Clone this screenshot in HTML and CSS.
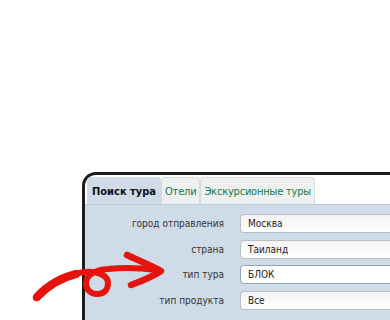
FILE: index.html
```html
<!DOCTYPE html>
<html>
<head>
<meta charset="utf-8">
<title>Поиск тура</title>
<link rel="stylesheet" href="styles.css">
</head>
<body>
<div id="frame">
 <ul class="tabs">
  <li class="active">Поиск тура</li>
  <li>Отели</li>
  <li>Экскурсионные туры</li>
 </ul>
 <div class="panel">
  <form>
   <div class="row"><label>город отправления</label><div class="field">Москва</div></div>
   <div class="row"><label>страна</label><div class="field">Таиланд</div></div>
   <div class="row"><label>тип тура</label><div class="field focus">БЛОК</div></div>
   <div class="row"><label>тип продукта</label><div class="field">Все</div></div>
  </form>
 </div>
</div>

<svg class="arrow" width="180" height="70" viewBox="0 0 180 70">
 <path d="M36 58 C50 44 66 34 85 32 C99 31 108 36 108 43 C108 51 103 54 97 54 C90 54 86 49 86 43 C86 35 95 30 108 29 C125 27 142 28 157 30" fill="none" stroke="#e5140e" stroke-width="6" stroke-linecap="round"/>
 <path d="M37 57 C48 45 60 38 76 34" fill="none" stroke="#e5140e" stroke-width="8.5" stroke-linecap="round"/>
 <path d="M127 15 C140 21 152 26 161 31 C152 37 142 41 131 45" fill="none" stroke="#e5140e" stroke-width="6.5" stroke-linecap="round" stroke-linejoin="round"/>
</svg>
</body>
</html>
```

FILE: styles.css
```css
body{
	margin: 0;
	background: #fff;
	overflow: hidden;
	height: 320px;
	font-family: "DejaVu Sans Condensed", "DejaVu Sans", Verdana, sans-serif;
	font-size: 11px;
}

/* frame */
#frame{
	margin: 172px 0 0 82px;
	width: 308px;
	border-top: 3px solid #1c1c1c;
	border-left: 3px solid #1c1c1c;
	border-top-left-radius: 14px;
	background: #fff;
}

/* tabs */
.tabs{
	list-style: none;
	margin: 0;
	padding: 2px 0 0 2px;
	display: flex;
	border-bottom: 1px solid #bccbd9;
}
.tabs li{
	height: 26px;
	line-height: 28px;
	padding: 0 3px;
	background: #eef0f0;
	border: 1px solid #d5dadd;
	border-bottom: none;
	border-radius: 4px 4px 0 0;
	color: #14784a;
	letter-spacing: -0.2px;
}
.tabs li.active{
	background: #cfdce8;
	border-color: #cfdce8;
	color: #111;
	font-weight: bold;
	padding: 0 4px;
	letter-spacing: 0;
}

/* form */
.panel{
	background: #cfdce8;
	padding: 6px 0 12px 0;
	height: 100px;
}
.row{
	display: flex;
	align-items: center;
	height: 25.5px;
}
.row label{
	width: 139px;
	text-align: right;
	color: #333;
	font-size: 10px;
	padding-right: 16px;
}
.field{
	flex: 1;
	height: 17px;
	line-height: 18px;
	padding-left: 7px;
	border: 1px solid #b9bfc6;
	border-right: none;
	border-radius: 4px 0 0 4px;
	background: linear-gradient(#f3f3f3, #fff);
	color: #222;
	font-size: 10px;
}
.field.focus{
	border-color: #8fa4bb;
	background: #fff;
}

.arrow{
	position: absolute;
	left: 0;
	top: 240px;
}
```
